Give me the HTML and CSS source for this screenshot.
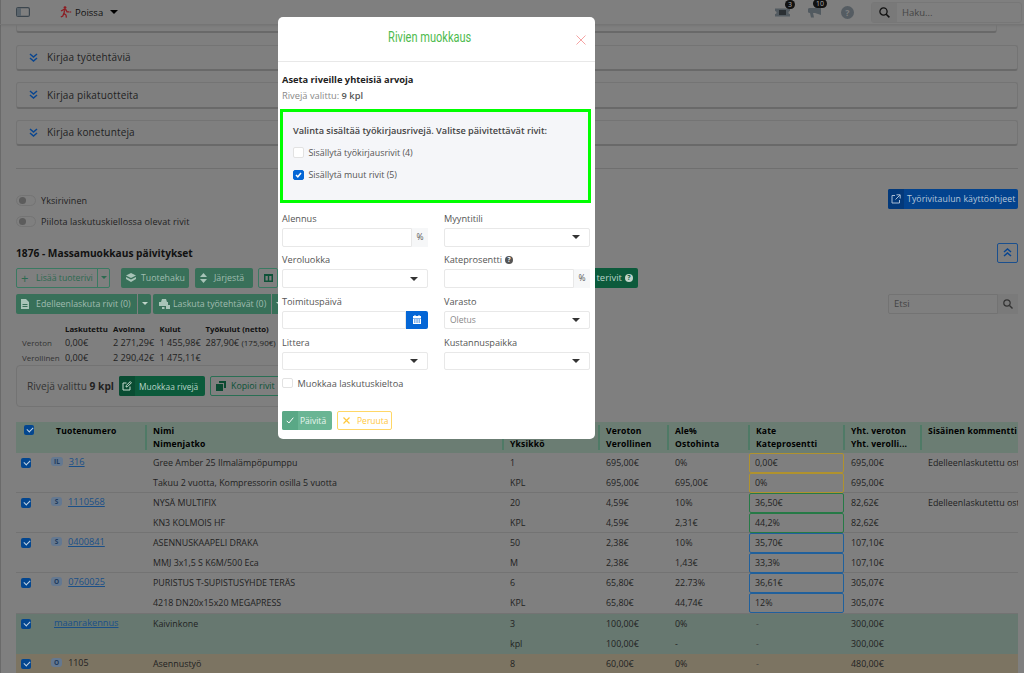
FILE: index.html
```html
<!DOCTYPE html>
<html lang="fi">
<head>
    <meta charset="UTF-8">
    <meta name="viewport" content="width=device-width, initial-scale=1.0">
    <title>Rivien muokkaus</title>
    <link rel="stylesheet" href="styles.css">
</head>
<body>

    <div class="app">
    <div class="topbar">
        <div class="topbar-left">
            <svg class="panel-icon" width="14" height="10" viewBox="0 0 14 10"><rect x=".6" y=".6" width="12.8" height="8.8" rx="1.5" fill="none" stroke="#3c464e" stroke-width="1.2"/><rect x="1" y="1" width="4" height="8" fill="#5a646c"/></svg>
            <svg class="away-icon" width="12" height="12" viewBox="0 0 12 12"><circle cx="5" cy="1.6" r="1.4" fill="#8c1c22"/><path d="M1 5l3-1.500 2 .3 1 2h2M4.600 4l-.6 3.400 2 1.600.4 2.600M3.800 7.600L2.800 10 .8 11" fill="none" stroke="#8c1c22" stroke-width="1.3"/><path d="M9.600 5l2 1-2 1z" fill="#8c1c22"/></svg>
            <span class="away-text">Poissa</span>
            <span class="caret caret-top"></span>
        </div>
        <div class="topbar-right">
            <div class="notice">
                <svg width="15" height="11" viewBox="0 0 15 11"><path d="M0 1.500h15v2.400a1.600 1.600 0 0 0 0 3.200v2.400H0V7.100a1.600 1.600 0 0 0 0-3.200z" fill="#525a60"/><rect x="4" y="3" width="7" height="5" fill="#2a2f33"/></svg>
                <span class="badge badge-small">3</span>
            </div>
            <div class="notice notice-horn">
                <svg width="13" height="12" viewBox="0 0 13 12"><path d="M13 0v9L7 7H5l1 4.500H3L2 7a2.500 2.500 0 0 1 0-5h5z" fill="#525a60"/></svg>
                <span class="badge">10</span>
            </div>
            <span class="help-circle">?</span>
            <div class="top-search">
                <span class="top-search-icon">
                    <svg width="11" height="11" viewBox="0 0 11 11"><circle cx="4.500" cy="4.500" r="3.600" fill="none" stroke="#111" stroke-width="1.300"/><path d="M7.200 7.200l3.200 3.200" stroke="#111" stroke-width="1.500"/></svg>
                </span>
                <span class="top-search-text">Haku...</span>
            </div>
        </div>
    </div>

    <div class="page">
        <div class="accordion-stub"></div>
        <div class="accordion"><svg class="chev" width="9" height="9" viewBox="0 0 9 9"><path d="M1 1l3.500 3 3.500-3M1 5l3.500 3 3.500-3" fill="none" stroke="#0a4690" stroke-width="1.500"/></svg>Kirjaa työtehtäviä</div>
        <div class="accordion"><svg class="chev" width="9" height="9" viewBox="0 0 9 9"><path d="M1 1l3.500 3 3.500-3M1 5l3.500 3 3.500-3" fill="none" stroke="#0a4690" stroke-width="1.500"/></svg>Kirjaa pikatuotteita</div>
        <div class="accordion"><svg class="chev" width="9" height="9" viewBox="0 0 9 9"><path d="M1 1l3.500 3 3.500-3M1 5l3.500 3 3.500-3" fill="none" stroke="#0a4690" stroke-width="1.500"/></svg>Kirjaa konetunteja</div>
        <hr class="divider">

        <div class="options">
            <div class="toggles">
                <div class="toggle-row"><span class="toggle"></span>Yksirivinen</div>
                <div class="toggle-row"><span class="toggle"></span>Piilota laskutuskiellossa olevat rivit</div>
            </div>
            <div class="guide-btn">
                <span class="guide-icon">
                    <svg width="10" height="10" viewBox="0 0 10 10"><path d="M4 1.500H1v7.500h7.500V6M5.500.8h3.700v3.700M9 1L4.500 5.500" fill="none" stroke="#a9bdd4" stroke-width="1"/></svg>
                </span>
                <span class="guide-text">Työrivitaulun käyttöohjeet</span>
            </div>
        </div>

        <div class="title-row">
            <h2>1876 - Massamuokkaus päivitykset</h2>
            <span class="collapse-btn"><svg width="9" height="9" viewBox="0 0 9 9"><path d="M1 4l3.500-3 3.500 3M1 8l3.500-3 3.500 3" fill="none" stroke="#0a4690" stroke-width="1.500"/></svg></span>
        </div>

        <div class="toolbar">
            <span class="btn btn-outline btn-add"><b class="plus">+</b>Lisää tuoterivi</span><span class="btn btn-outline btn-split"><span class="caret caret-green"></span></span>
            <span class="btn btn-fill btn-search"><svg width="10" height="9" viewBox="0 0 10 9"><path d="M5 0l5 2.500L5 5 0 2.500zM0 4l5 2.500L10 4v2L5 9 0 6z" fill="#a8c4b8"/></svg>Tuotehaku</span>
            <span class="btn btn-fill btn-sort"><svg width="7" height="10" viewBox="0 0 7 10"><path d="M3.500 0L7 4H0zM3.500 10L0 6h7z" fill="#a8c4b8"/></svg>Järjestä</span>
            <span class="btn btn-outline btn-cols"><svg width="9" height="8" viewBox="0 0 9 8"><path d="M0 0h9v8H0zM1.500 2v4.500h2.300V2zM5.200 2v4.500h2.300V2z" fill="#0f5238" fill-rule="evenodd"/></svg></span>
            <span class="btn btn-solid btn-hidden">terivit <span class="help-dot">?</span></span>
        </div>

        <div class="toolbar toolbar-second">
            <div class="toolbar-buttons">
                <span class="btn btn-fill btn-forward"><svg width="8" height="10" viewBox="0 0 8 10"><path d="M0 0h5l3 3v7H0zM1.500 5v1h5V5zM1.500 7v1h5V7z" fill="#a8c4b8" fill-rule="evenodd"/></svg>Edelleenlaskuta rivit (0)</span><span class="btn btn-fill btn-split-fill"><span class="caret caret-white"></span></span>
                <span class="btn btn-fill btn-invoice"><svg width="11" height="10" viewBox="0 0 11 10"><path d="M2 3l1-3h4l1 3h1v4H0V3zM3 8h2.500v2H3zM7 6h4v4H7z" fill="#a8c4b8"/></svg>Laskuta työtehtävät (0)</span><span class="btn btn-fill btn-split-fill"><span class="caret caret-white"></span></span>
            </div>
            <div class="search-box">
                <span class="search-input">Etsi</span>
                <span class="search-addon"><svg width="10" height="10" viewBox="0 0 10 10"><circle cx="4" cy="4" r="3.200" fill="none" stroke="#333" stroke-width="1.200"/><path d="M6.500 6.500l3 3" stroke="#333" stroke-width="1.400"/></svg></span>
            </div>
        </div>

        <div class="summary">
            <span></span><b>Laskutettu</b><b>Avoinna</b><b>Kulut</b><b>Työkulut (netto)</b>
            <span class="sum-label">Veroton</span><span>0,00€</span><span>2 271,29€</span><span>1 455,98€</span><span>287,90€ <small>(175,90€)</small></span>
            <span class="sum-label">Verollinen</span><span>0,00€</span><span>2 290,42€</span><span>1 475,11€</span><span></span>
        </div>

        <div class="selected-card">
            <span class="selected-text">Rivejä valittu <b>9 kpl</b></span>
            <span class="btn-edit"><span class="btn-edit-icon"><svg width="10" height="10" viewBox="0 0 10 10"><path d="M8 5.500V9H1V2h3.500M4 6l.4-1.600L8.200.6l1.200 1.200L5.600 5.600z" fill="none" stroke="#c8dcd0" stroke-width="1"/></svg></span>Muokkaa rivejä</span>
            <span class="btn-copy"><svg width="10" height="10" viewBox="0 0 10 10"><path d="M3 0h7v7H8V2H3zM0 3h7v7H0z" fill="#0c4a32"/></svg>Kopioi rivit</span>
        </div>

        <div class="grid-table">
            <div class="grid-row grid-head">
                <div class="col-check"><span class="check"></span></div>
                <div class="col-number"><b>Tuotenumero</b></div>
                <div class="head-cell"><b>Nimi</b><b>Nimenjatko</b></div>
                <div class="head-cell"><b>&nbsp;</b><b>Yksikkö</b></div>
                <div class="head-cell"><b>Veroton</b><b>Verollinen</b></div>
                <div class="head-cell"><b>Ale%</b><b>Ostohinta</b></div>
                <div class="head-cell"><b>Kate</b><b>Kateprosentti</b></div>
                <div class="head-cell"><b>Yht. veroton</b><b>Yht. verolli...</b></div>
                <div class="head-cell"><b>Sisäinen kommentti</b></div>
            </div>

            <div class="grid-row">
                <div class="col-check"><span class="check"></span></div>
                <div class="col-number"><span class="pill">IL</span><a class="num-link">316</a></div>
                <div class="cell"><span>Gree Amber 25 Ilmalämpöpumppu</span><span>Takuu 2 vuotta, Kompressorin osilla 5 vuotta</span></div>
                <div class="cell"><span>1</span><span>KPL</span></div>
                <div class="cell"><span>695,00€</span><span>695,00€</span></div>
                <div class="cell"><span>0%</span><span>695,00€</span></div>
                <div class="cell-margin margin-yellow"><span>0,00€</span><span>0%</span></div>
                <div class="cell"><span>695,00€</span><span>695,00€</span></div>
                <div class="cell"><span>Edelleenlaskutettu ostolasku</span></div>
            </div>

            <div class="grid-row">
                <div class="col-check"><span class="check"></span></div>
                <div class="col-number"><span class="pill">S</span><a class="num-link">1110568</a></div>
                <div class="cell"><span>NYSÄ MULTIFIX</span><span>KN3 KOLMOIS HF</span></div>
                <div class="cell"><span>20</span><span>KPL</span></div>
                <div class="cell"><span>4,59€</span><span>4,59€</span></div>
                <div class="cell"><span>10%</span><span>2,31€</span></div>
                <div class="cell-margin margin-green"><span>36,50€</span><span>44,2%</span></div>
                <div class="cell"><span>82,62€</span><span>82,62€</span></div>
                <div class="cell"><span>Edelleenlaskutettu ostolasku</span></div>
            </div>

            <div class="grid-row">
                <div class="col-check"><span class="check"></span></div>
                <div class="col-number"><span class="pill">S</span><a class="num-link">0400841</a></div>
                <div class="cell"><span>ASENNUSKAAPELI DRAKA</span><span>MMJ 3x1,5 S K6M/500 Eca</span></div>
                <div class="cell"><span>50</span><span>M</span></div>
                <div class="cell"><span>2,38€</span><span>2,38€</span></div>
                <div class="cell"><span>10%</span><span>1,43€</span></div>
                <div class="cell-margin margin-blue"><span>35,70€</span><span>33,3%</span></div>
                <div class="cell"><span>107,10€</span><span>107,10€</span></div>
                <div class="cell"></div>
            </div>

            <div class="grid-row">
                <div class="col-check"><span class="check"></span></div>
                <div class="col-number"><span class="pill">O</span><a class="num-link">0760025</a></div>
                <div class="cell"><span>PURISTUS T-SUPISTUSYHDE TERÄS</span><span>4218 DN20x15x20 MEGAPRESS</span></div>
                <div class="cell"><span>6</span><span>KPL</span></div>
                <div class="cell"><span>65,80€</span><span>65,80€</span></div>
                <div class="cell"><span>22.73%</span><span>44,74€</span></div>
                <div class="cell-margin margin-blue"><span>36,61€</span><span>12%</span></div>
                <div class="cell"><span>305,07€</span><span>305,07€</span></div>
                <div class="cell"></div>
            </div>

            <div class="grid-row row-green">
                <div class="col-check"><span class="check"></span></div>
                <div class="col-number col-plain"><a class="num-link">maanrakennus</a></div>
                <div class="cell"><span>Kaivinkone</span></div>
                <div class="cell"><span>3</span><span>kpl</span></div>
                <div class="cell"><span>100,00€</span><span>100,00€</span></div>
                <div class="cell"><span>0%</span><span>-</span></div>
                <div class="cell cell-dash"><span>-</span><span>-</span></div>
                <div class="cell"><span>300,00€</span><span>300,00€</span></div>
                <div class="cell"></div>
            </div>

            <div class="grid-row row-tan">
                <div class="col-check"><span class="check"></span></div>
                <div class="col-number"><span class="pill">O</span><span class="num-plain">1105</span></div>
                <div class="cell"><span>Asennustyö</span></div>
                <div class="cell"><span>8</span></div>
                <div class="cell"><span>60,00€</span></div>
                <div class="cell"><span>0%</span></div>
                <div class="cell cell-dash"><span>-</span></div>
                <div class="cell"><span>480,00€</span></div>
                <div class="cell"></div>
            </div>
        </div>
    </div>
    </div>

    <div class="modal">
        <div class="modal-header">
            <span class="modal-title">Rivien muokkaus</span>
            <svg class="modal-close" width="10" height="10" viewBox="0 0 10 10"><path d="M.5.500l9 9M9.500.500l-9 9" stroke="#f5a3a3" stroke-width="1"/></svg>
        </div>
        <div class="modal-body">
            <h3>Aseta riveille yhteisiä arvoja</h3>
            <p class="modal-count">Rivejä valittu: <strong>9 kpl</strong></p>

            <div class="choice-box">
                <p class="choice-title">Valinta sisältää työkirjausrivejä. Valitse päivitettävät rivit:</p>
                <label class="choice"><span class="box-empty"></span>Sisällytä työkirjausrivit (4)</label>
                <label class="choice"><span class="box-checked"><svg width="7" height="6" viewBox="0 0 7 6"><path d="M1 3l1.800 1.800L6 1" fill="none" stroke="#fff" stroke-width="1.500"/></svg></span>Sisällytä muut rivit (5)</label>
            </div>

            <div class="form-grid">
                <div class="field">
                    <label>Alennus</label>
                    <div class="input-group"><span class="input"></span><span class="addon">%</span></div>
                </div>
                <div class="field">
                    <label>Myyntitili</label>
                    <div class="select"><span class="caret"></span></div>
                </div>
                <div class="field">
                    <label>Veroluokka</label>
                    <div class="select"><span class="caret"></span></div>
                </div>
                <div class="field">
                    <label>Kateprosentti <span class="info-dot">?</span></label>
                    <div class="input-group"><span class="input"></span><span class="addon">%</span></div>
                </div>
                <div class="field">
                    <label>Toimituspäivä</label>
                    <div class="input-group"><span class="input"></span><span class="date-addon"><svg width="8" height="9" viewBox="0 0 8 9"><path d="M0 1h1.500V0h1v1h3V0h1v1H8v2H0zM0 3.500h8V9H0zM1 4.500v1h1.500v-1zM3.300 4.500v1h1.500v-1zM5.500 4.500v1H7v-1zM1 6.500v1h1.500v-1zM3.300 6.500v1h1.500v-1zM5.500 6.500v1H7v-1z" fill="#fff" fill-rule="evenodd"/></svg></span></div>
                </div>
                <div class="field">
                    <label>Varasto</label>
                    <div class="select select-value">Oletus<span class="caret"></span></div>
                </div>
                <div class="field">
                    <label>Littera</label>
                    <div class="select"><span class="caret"></span></div>
                </div>
                <div class="field">
                    <label>Kustannuspaikka</label>
                    <div class="select"><span class="caret"></span></div>
                </div>
            </div>

            <label class="block-row"><span class="box-empty"></span>Muokkaa laskutuskieltoa</label>

            <div class="modal-actions">
                <span class="btn-save"><span class="btn-save-icon"><svg width="8" height="7" viewBox="0 0 8 7"><path d="M.7 3.800l2.200 2.200L7.300.7" fill="none" stroke="#fff" stroke-width="1"/></svg></span>Päivitä</span>
                <span class="btn-cancel"><svg width="7" height="7" viewBox="0 0 7 7"><path d="M.5.500l6 6M6.500.500l-6 6" stroke="#ffc83d" stroke-width="1.200"/></svg>Peruuta</span>
            </div>
        </div>
    </div>

</body>
</html>
```

FILE: styles.css
```css
* {
    box-sizing: border-box;
}

html, body {
    height: 673px;
    overflow: hidden;
}

body {
    position: relative;
    margin: 0;
    background-color: #7f7f7f;
    color: #222;
    font-family: "Open Sans", Arial, sans-serif;
    font-size: 10px;
}

/* everything behind the dialog has the darkened colours */
.app {
    height: 673px;
    overflow: hidden;
    background-color: #7f7f7f;
    box-shadow: inset 1px 0 0 #6a6a6a;
}

.caret {
    display: inline-block;
    width: 0;
    height: 0;
    border-left: 4px solid transparent;
    border-right: 4px solid transparent;
    border-top: 4px solid #333;
}

/* top bar */
.topbar {
    display: flex;
    justify-content: space-between;
    align-items: center;
    height: 25px;
    padding-right: 2px;
    border-bottom: 1px solid #757575;
    box-shadow: 0 1px 2px rgba(0, 0, 0, .08);
}

.topbar-left {
    display: flex;
    align-items: center;
}

.panel-icon {
    margin-left: 16px;
}

.away-icon {
    margin-left: 30px;
}

.away-text {
    margin-left: 3px;
    font-size: 9.5px;
    color: #111;
}

.caret-top {
    margin-left: 7px;
    border-top-color: #000;
}

.topbar-right {
    display: flex;
    align-items: center;
}

.notice {
    position: relative;
    display: flex;
    margin-right: 18px;
}

.notice-horn {
    margin-right: 20px;
}

.badge {
    position: absolute;
    top: -7px;
    left: 5px;
    min-width: 14px;
    height: 9px;
    padding: 0 2px;
    border-radius: 5px;
    background-color: #111;
    color: #aaa;
    font-size: 7px;
    line-height: 9px;
    text-align: center;
}

.badge-small {
    left: 10px;
    min-width: 10px;
}

.help-circle {
    width: 13px;
    height: 13px;
    margin-right: 17px;
    border-radius: 50%;
    background-color: #555c62;
    color: #7f7f7f;
    font-size: 9px;
    font-weight: 700;
    line-height: 13px;
    text-align: center;
}

.top-search {
    display: flex;
    width: 151px;
    height: 21px;
    border: 1px solid #777;
    border-radius: 3px;
}

.top-search-icon {
    display: flex;
    align-items: center;
    justify-content: center;
    width: 25px;
    background-color: #797979;
}

.top-search-text {
    margin-left: 5px;
    color: #444;
    font-size: 9.5px;
    line-height: 19px;
}

/* page */
.page {
    padding: 0 6px 0 16px;
}

.accordion-stub {
    width: 981px;
    height: 8px;
    margin-bottom: 11.5px;
    border: 1px solid #747474;
    border-top: 0;
    border-bottom: 2px solid #696969;
    border-radius: 0 0 3px 3px;
}

.accordion {
    display: flex;
    align-items: center;
    height: 26.5px;
    margin-bottom: 11px;
    padding-left: 12px;
    border: 1px solid #747474;
    border-bottom: 2px solid #696969;
    border-radius: 3px;
    color: #222;
    font-size: 10px;
    letter-spacing: .15px;
}

.chev {
    flex: none;
    margin-right: 9px;
}

.divider {
    height: 1px;
    margin: 21.5px 0 0;
    border: 0;
    background-color: #6f6f6f;
}

.options {
    display: flex;
    justify-content: space-between;
    margin-top: 20px;
}

.toggles {
    padding-top: 6px;
}

.toggle-row {
    display: flex;
    align-items: center;
    height: 11px;
    margin-bottom: 10.5px;
    color: #222;
    font-size: 9px;
    letter-spacing: .1px;
}

.toggle {
    position: relative;
    width: 20px;
    height: 11px;
    margin-right: 5px;
    border: 1px solid #747474;
    border-radius: 6px;
}

.toggle::before {
    content: "";
    position: absolute;
    left: 2px;
    top: 1px;
    width: 7px;
    height: 7px;
    border-radius: 50%;
    background-color: #5c5c5c;
}

.guide-btn {
    display: flex;
    width: 130px;
    height: 20px;
    border-radius: 2px;
    background-color: #03438e;
    color: #b8c8da;
    font-size: 8.7px;
    line-height: 20px;
    letter-spacing: .1px;
}

.guide-icon {
    flex: none;
    display: flex;
    align-items: center;
    justify-content: center;
    width: 16px;
    border-radius: 2px 0 0 2px;
    background-color: #03397a;
}

.guide-text {
    margin-left: 3px;
    white-space: nowrap;
}

.title-row {
    display: flex;
    justify-content: space-between;
    align-items: center;
    margin-top: 5px;
}

.title-row h2 {
    margin: 0;
    color: #111;
    font-size: 10.2px;
    font-weight: 700;
}

.collapse-btn {
    display: flex;
    align-items: center;
    justify-content: center;
    width: 21px;
    height: 20px;
    border: 1px solid #1a4f8e;
    border-radius: 2px;
}

/* toolbars */
.toolbar {
    display: flex;
    align-items: center;
    height: 20px;
    margin-top: 5px;
    white-space: nowrap;
}

.toolbar-second {
    justify-content: space-between;
    margin-top: 6px;
}

.toolbar-buttons {
    display: flex;
}

.btn {
    flex: none;
    display: flex;
    align-items: center;
    height: 20px;
    font-size: 8.8px;
}

.btn svg {
    flex: none;
}

.btn-outline {
    border: 1px solid #3a7a62;
    border-radius: 2px;
    color: #2c6a50;
}

.btn-fill {
    background-color: #387059;
    border-radius: 2px;
    color: #a0bcb0;
}

.btn-solid {
    background-color: #0c5a3b;
    border-radius: 2px;
    color: #b8d4c8;
}

.btn-add {
    width: 82px;
    padding-left: 4px;
    border-radius: 2px 0 0 2px;
    font-size: 8.7px;
}

.plus {
    flex: none;
    width: 15px;
    font-size: 13px;
    font-weight: 400;
    line-height: 18px;
}

.btn-split {
    justify-content: center;
    width: 13px;
    margin-left: -1px;
    border-radius: 0 2px 2px 0;
}

.caret-green {
    border-width: 3px 3px 0;
    border-top-color: #2c6a50;
}

.btn-search {
    width: 68px;
    margin-left: 11px;
    padding-left: 5px;
}

.btn-search svg {
    margin-right: 5px;
}

.btn-sort {
    width: 58px;
    margin-left: 6px;
    padding-left: 5px;
}

.btn-sort svg {
    margin-right: 7px;
}

.btn-cols {
    justify-content: center;
    width: 20px;
    margin-left: 5px;
}

/* this one runs under the dialog, only its end shows */
.btn-hidden {
    justify-content: flex-end;
    width: 360px;
    padding-right: 5px;
    font-size: 9.5px;
}

.help-dot {
    width: 8px;
    height: 8px;
    margin-left: 3px;
    border-radius: 50%;
    background-color: #c0d4ca;
    color: #0c5a3b;
    font-size: 7px;
    font-weight: 700;
    line-height: 8px;
    text-align: center;
}

.btn-forward {
    width: 121px;
    padding-left: 5px;
    border-radius: 2px 0 0 2px;
}

.btn-forward svg {
    margin-right: 7px;
}

.btn-split-fill {
    justify-content: center;
    width: 13px;
    margin-left: 1px;
    border-radius: 0 2px 2px 0;
}

.caret-white {
    border-width: 3px 3px 0;
    border-top-color: #c0d4ca;
}

.btn-invoice {
    width: 118px;
    margin-left: 2px;
    padding-left: 6px;
    border-radius: 2px 0 0 2px;
}

.btn-invoice svg {
    margin-right: 3px;
}

.search-box {
    display: flex;
    width: 130px;
    height: 20px;
}

.search-input {
    width: 110px;
    padding-left: 5px;
    border: 1px solid #737373;
    border-radius: 2px 0 0 2px;
    color: #444;
    font-size: 9.5px;
    line-height: 18px;
}

.search-addon {
    display: flex;
    align-items: center;
    justify-content: center;
    width: 20px;
    background-color: #7a7a7a;
}

/* summary */
.summary {
    display: grid;
    grid-template-columns: 43px 48px 46.5px 46px 200px;
    grid-auto-rows: 14.5px;
    margin: 8px 0 0 6px;
    color: #222;
    font-size: 9.1px;
    line-height: 14.5px;
    white-space: nowrap;
}

.summary b {
    color: #111;
    font-size: 7.8px;
}

.summary small {
    font-size: 8px;
}

.sum-label {
    font-size: 8px;
    color: #333;
}

.selected-card {
    display: flex;
    align-items: center;
    width: 420px;
    height: 42px;
    padding-left: 10px;
    border: 1px solid #737373;
    border-radius: 4px;
}

.selected-text {
    flex: none;
    width: 92px;
    color: #333;
    font-size: 10.2px;
    white-space: nowrap;
}

.selected-text b {
    color: #222;
}

.btn-edit {
    flex: none;
    display: flex;
    align-items: center;
    width: 86px;
    height: 20px;
    border-radius: 2px;
    background-color: #0c5a3b;
    color: #b8d4c8;
    font-size: 8.4px;
    white-space: nowrap;
}

.btn-edit-icon {
    display: flex;
    align-items: center;
    justify-content: center;
    width: 16px;
    height: 20px;
    margin-right: 4px;
    border-radius: 2px 0 0 2px;
    background-color: #094c32;
}

.btn-copy {
    flex: none;
    display: flex;
    align-items: center;
    width: 110px;
    height: 20px;
    margin-left: 5px;
    padding-left: 5px;
    border: 1px solid #2a6f54;
    border-radius: 2px;
    color: #0c5237;
    font-size: 8.8px;
}

.btn-copy svg {
    margin-right: 5px;
}

/* rows table */
.grid-table {
    margin-top: 15px;
}

.grid-row {
    display: grid;
    grid-template-columns: 32px 97px 357px 96px 69px 81px 95px 77px 98px;
    height: 40.3px;
    border-bottom: 1px solid #737373;
    color: #222;
    font-size: 8.9px;
    line-height: 20px;
}

.grid-head {
    height: 30.5px;
    border-bottom: 0;
    background-color: #6b7d73;
    color: #000;
    line-height: 13px;
}

.grid-head b {
    display: block;
    height: 13px;
    font-size: 8.6px;
    letter-spacing: .15px;
    white-space: nowrap;
}

.row-green {
    border-bottom: 0;
    background-color: #677870;
}

.row-tan {
    border-bottom: 0;
    background-color: #7c7462;
}

.col-check {
    padding: 5px 0 0 5px;
}

.grid-head .col-check {
    padding: 3px 0 0 8px;
}

.col-number {
    display: flex;
    align-items: flex-start;
    padding-left: 3px;
}

.grid-head .col-number {
    padding: 3px 0 0 8px;
}

.col-plain {
    padding-left: 6px;
}

.check {
    position: relative;
    display: block;
    width: 10px;
    height: 10px;
    border-radius: 2px;
    background-color: #03468f;
}

.check::after {
    content: "";
    position: absolute;
    left: 2.5px;
    top: 2px;
    width: 5px;
    height: 3px;
    border-left: 1.3px solid #bcd0e4;
    border-bottom: 1.3px solid #bcd0e4;
    transform: rotate(-45deg);
}

.pill {
    min-width: 11px;
    height: 9px;
    margin: 4px 6px 0 0;
    padding: 0 3px;
    border-radius: 3px;
    background-color: #647890;
    color: #1f3a5c;
    font-size: 6.5px;
    font-weight: 700;
    line-height: 9px;
    text-align: center;
}

.num-link {
    color: #1a4f88;
    font-size: 9.2px;
    line-height: 17px;
    text-decoration: underline;
}

.num-plain {
    line-height: 17px;
}

.head-cell, .cell, .cell-margin {
    display: flex;
    flex-direction: column;
    min-width: 0;
}

.head-cell {
    margin: 3px 0 0;
    padding-left: 6px;
    border-left: 2.5px solid #4f7a66;
    height: 25px;
}

.cell {
    padding-left: 8px;
    overflow: hidden;
    white-space: nowrap;
}

.cell span, .cell-margin span {
    display: block;
    height: 20px;
}

.cell-dash {
    color: #444;
}

.cell-margin {
    margin-left: 1px;
    margin-right: -1px;
}

.cell-margin span {
    padding-left: 5px;
    border: 1px solid currentColor;
    border-radius: 2px;
    line-height: 18px;
}

.margin-yellow span {
    border-color: #b0922e;
}

.margin-green span {
    border-color: #267a46;
}

.margin-blue span {
    border-color: #20609c;
}

/* dialog */
.modal {
    position: absolute;
    top: 17px;
    left: 278px;
    width: 317px;
    height: 422px;
    border-radius: 5px;
    background-color: #fff;
    color: #444;
}

.modal-header {
    position: relative;
    height: 45px;
    padding-right: 14px;
    border-bottom: 1px solid #e8e8e8;
    text-align: center;
}

.modal-title {
    display: inline-block;
    margin-top: 11px;
    color: #4dbb4d;
    font-family: Roboto, sans-serif;
    font-size: 14.5px;
    line-height: 20px;
    transform: scaleX(.76);
}

.modal-close {
    position: absolute;
    top: 18px;
    right: 9px;
}

.modal-body {
    padding: 0 5px 0 4px;
}

.modal-body h3 {
    margin: 11px 0 0;
    color: #222;
    font-size: 9.3px;
    font-weight: 700;
    line-height: 14px;
}

.modal-count {
    margin: 2px 0 0;
    color: #888;
    font-size: 9.3px;
    line-height: 14px;
}

.modal-count strong {
    color: #555;
    font-weight: 600;
}

.choice-box {
    width: 311px;
    height: 94px;
    margin: 6px 0 0 -2px;
    padding: 12px 10px 0 10px;
    border: 3px solid #00ff00;
    background-color: #f5f6f9;
}

.choice-title {
    margin: 0 0 3px;
    color: #444;
    font-size: 9.2px;
    font-weight: 600;
    line-height: 14px;
    white-space: nowrap;
}

.choice {
    display: flex;
    align-items: center;
    height: 22.5px;
    color: #555;
    font-size: 8.9px;
}

.box-empty, .box-checked {
    flex: none;
    display: flex;
    align-items: center;
    justify-content: center;
    width: 10.5px;
    height: 10.5px;
    margin-right: 5px;
    border: 1px solid #e2e2e2;
    border-radius: 2px;
    background-color: #fff;
}

.box-checked {
    border-color: #0466d6;
    background-color: #0466d6;
}

.form-grid {
    display: grid;
    grid-template-columns: 146px 146px;
    column-gap: 16px;
    margin-top: 6px;
}

.field {
    height: 41.3px;
}

.field label {
    display: flex;
    align-items: center;
    height: 19px;
    color: #555;
    font-size: 9.2px;
}

.input-group {
    display: flex;
    height: 18.5px;
}

.input {
    flex: 1;
    border: 1px solid #e8e8e8;
    border-radius: 2px 0 0 2px;
}

.addon {
    width: 16px;
    background-color: #f6f7f8;
    color: #555;
    font-size: 8.5px;
    line-height: 18.5px;
    text-align: center;
}

.date-addon {
    display: flex;
    align-items: center;
    justify-content: center;
    width: 22px;
    border-radius: 0 2px 2px 0;
    background-color: #0466d6;
}

.select {
    display: flex;
    align-items: center;
    justify-content: flex-end;
    height: 18.5px;
    padding: 0 9px;
    border: 1px solid #e8e8e8;
    border-radius: 2px;
}

.select-value {
    justify-content: space-between;
    padding-left: 5px;
    color: #888;
    font-size: 8.5px;
}

.info-dot {
    width: 8px;
    height: 8px;
    margin-left: 3px;
    border-radius: 50%;
    background-color: #555;
    color: #fff;
    font-size: 6.5px;
    font-weight: 700;
    line-height: 8px;
    text-align: center;
}

.block-row {
    display: flex;
    align-items: center;
    height: 12px;
    margin-top: 3px;
    color: #555;
    font-size: 9.2px;
}

.modal-actions {
    display: flex;
    margin-top: 22px;
}

.btn-save {
    display: flex;
    align-items: center;
    width: 50px;
    height: 19px;
    border-radius: 2px;
    background-color: #6ab594;
    color: #e8f5ef;
    font-size: 8.5px;
}

.btn-save-icon {
    display: flex;
    align-items: center;
    justify-content: center;
    width: 16px;
    height: 19px;
    margin-right: 2px;
    border-radius: 2px 0 0 2px;
    background-color: #5aa886;
}

.btn-cancel {
    display: flex;
    align-items: center;
    width: 55px;
    height: 19px;
    margin-left: 5px;
    padding-left: 5px;
    border: 1px solid #ffd766;
    border-radius: 2px;
    color: #ffc83d;
    font-size: 8.5px;
}

.btn-cancel svg {
    margin-right: 7px;
}
```
